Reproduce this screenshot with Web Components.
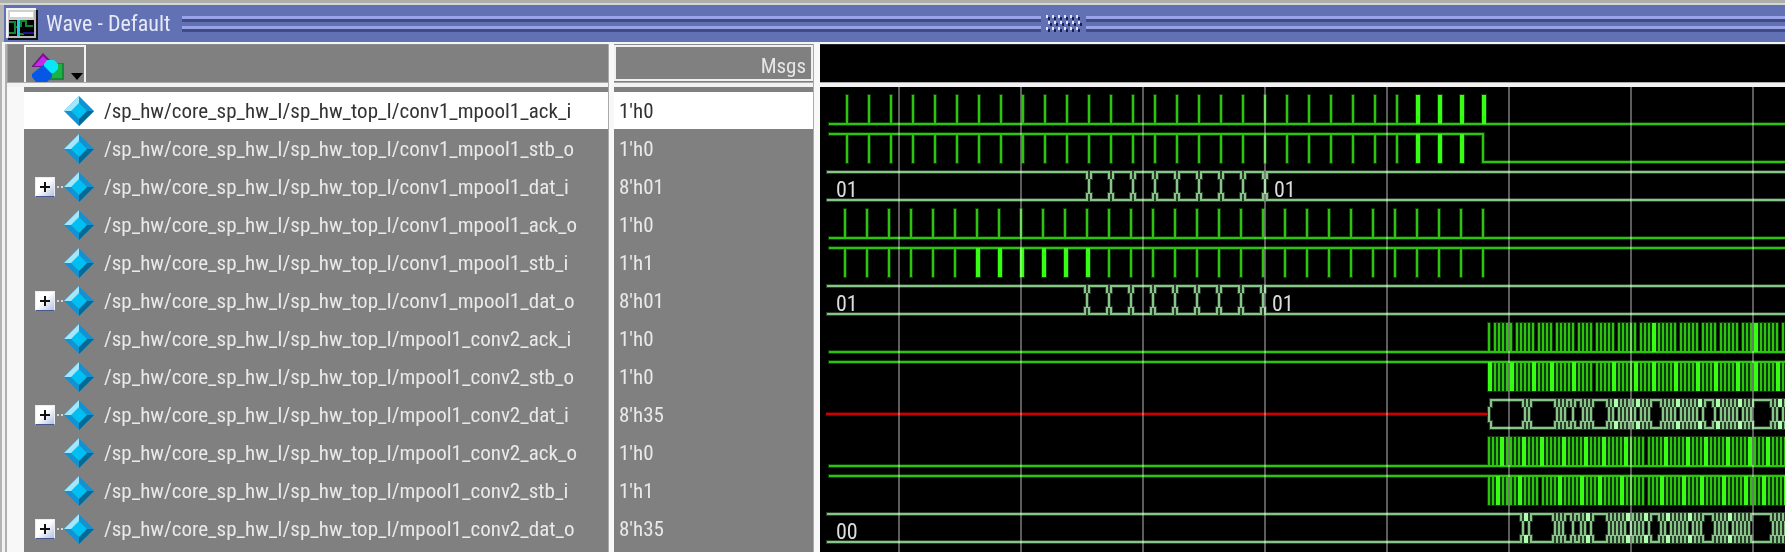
<!DOCTYPE html>
<html lang="en">
<head>
<meta charset="utf-8">
<title>Wave - Default</title>
<style>
html, body { margin: 0; height: 100%; background: #fff; }
body { font: 21px/38px "Roboto Condensed", "Liberation Sans Narrow", Roboto, "Liberation Sans", sans-serif; overflow: hidden; }
wave-window { height: 100%; }
</style>
</head>
<body>
<wave-window></wave-window>
<script>
const PREFIX = '/sp_hw/core_sp_hw_I/sp_hw_top_I/';

// Clock pulses repeat every 22px, bursts are placed on a 2px time grid.
const PITCH = 22, BURST = 668, UNIT = 2;
const pulses = (first, count, wide = [], lead = 0) =>
  Array.from({ length: count }, (_, k) => wide.includes(k) ? { x: first + k * PITCH - lead, w: 4 } : { x: first + k * PITCH, w: 2 });
const steps = (first, count) => Array.from({ length: count }, (_, k) => first + k * PITCH);
// A burst ticks every second unit; a break delays the next tick by one unit.
const burst = (breaks, wide) => {
  const out = [];
  for (let u = 0; u < 152;) {
    out.push({ x: BURST + u * UNIT, w: wide.includes(u) ? 4 : 2 });
    u += breaks.includes(u) ? 3 : 2;
  }
  return out;
};
const units = list => list.map(u => BURST + u * UNIT);

const A = [0, 11, 22, 31, 42, 51, 62, 73, 82, 93, 104, 113, 124, 133, 144];
const B = [6, 17, 26, 37, 48, 57, 68, 77, 88, 99, 108, 119, 130, 139, 150];
const C = [4, 15, 24, 35, 46, 55, 66, 77, 86, 97, 106, 117, 128, 137, 148];

const SIGNALS = [
  { name: 'conv1_mpool1_ack_i', value: "1'h0", selected: true, level: 0, ticks: pulses(26, 30, [26, 27, 28, 29], 2) },
  { name: 'conv1_mpool1_stb_o', value: "1'h0", level: 1, ticks: pulses(26, 29, [26, 27, 28], 2), fall: 662 },
  { name: 'conv1_mpool1_dat_i', value: "8'h01", bus: steps(268, 9), labels: [[16, '01'], [454, '01']] },
  { name: 'conv1_mpool1_ack_o', value: "1'h0", level: 0, ticks: pulses(24, 30) },
  { name: 'conv1_mpool1_stb_i', value: "1'h1", level: 1, ticks: pulses(24, 30, [6, 7, 8, 9, 10, 11]) },
  { name: 'conv1_mpool1_dat_o', value: "8'h01", bus: steps(266, 9), labels: [[16, '01'], [452, '01']] },
  { name: 'mpool1_conv2_ack_i', value: "1'h0", level: 0, ticks: burst(A, [82, 133]) },
  { name: 'mpool1_conv2_stb_o', value: "1'h0", level: 1, ticks: burst(A, A.filter(u => u !== 51)) },
  { name: 'mpool1_conv2_dat_i', value: "8'h35", unknown: BURST, bus: units([0, 18, 20, 34, 36, 38, 42, 47, 49, 51, 60, 62, 65, 67, 69, 71, 73, 76, 78, 80, 87, 89, 91, 93, 96, 98, 100, 102, 104, 107, 113, 116, 118, 120, 122, 124, 127, 129, 131, 142, 144, 147, 149]) },
  { name: 'mpool1_conv2_ack_o', value: "1'h0", level: 0, ticks: burst(B, B.filter(u => u !== 77)) },
  { name: 'mpool1_conv2_stb_i', value: "1'h1", level: 1, ticks: burst(C, C.filter(u => u !== 24 && u !== 77)) },
  { name: 'mpool1_conv2_dat_o', value: "8'h35", bus: units([17, 20, 33, 35, 37, 42, 46, 48, 51, 60, 62, 64, 66, 68, 71, 73, 75, 77, 80, 86, 88, 91, 93, 95, 97, 99, 102, 104, 106, 113, 115, 117, 119, 122, 124, 126, 128, 130, 142, 144, 146, 148]), labels: [[16, '00']] },
];

const shadow = (host, html) => {
  const t = document.createElement('template');
  t.innerHTML = html;
  host.attachShadow({ mode: 'open' }).append(t.content.cloneNode(true));
  return host.shadowRoot;
};

class WaveTitle extends HTMLElement {
  connectedCallback() {
    shadow(this, `<style>
      :host { display: flex; align-items: center; height: 37px; margin-left: 4px; background: #6270b4; color: #e6e9f6; }
      h1 { margin: 0 12px 0 8px; font-size: 22px; font-weight: 400; line-height: 30px; white-space: nowrap; }
      svg { flex: none; display: block; }
      .icon { margin-left: 2px; }
      .rail { flex: 699 1 0; height: 16px; background: linear-gradient(#98a3ea 0 3px, #424c80 3px 6px, #6270b4 6px 10px, #98a3ea 10px 13px, #424c80 13px 16px); }
      .rail.first { flex-grow: 859; }
      .grip { margin: 0 4px; }
    </style>
    <svg class="icon" width="32" height="32" viewBox="0 0 32 32" aria-hidden="true">
      <path fill="#111" d="M2 2h30v30H2z"/><path fill="#f4f4f4" d="M0 0h30v30H0z"/><path fill="#b8b8b8" d="M2 2h28v28H2z"/>
      <path fill="#d0d0d0" d="M2 2h26v26H2z"/><path fill="#fff" d="M4 4h23v5H4z"/><path fill="#000" d="M3 12h25v16H3z"/>
      <path fill="none" stroke="#108838" stroke-width="2" d="M3 14h6v5h4m2 0v-6h5v5h7M3 25h6v-5m4 6h5"/>
      <path fill="#24129a" d="M17 24h11v2H17z"/><path fill="#25c5e4" d="M11 12h3v16h-3z"/>
    </svg>
    <h1><slot></slot></h1>
    <span class="rail first"></span>
    <svg class="grip" width="37" height="18" aria-hidden="true"><defs><pattern id="dot" width="6" height="6" patternUnits="userSpaceOnUse">
      <path fill="#dfe4ff" d="M1 0h2v3H1z"/><path fill="#1b2142" d="M3 2h2v3H3z"/></pattern></defs>
      <path fill="url(#dot)" d="M0 0h36v6H0zM0 12h36v6H0z"/><g transform="translate(2 6)"><path fill="url(#dot)" d="M0 0h35v6H0z"/></g></svg>
    <span class="rail"></span>`);
  }
}

class ShapeMenu extends HTMLElement {
  connectedCallback() {
    shadow(this, `<style>
      :host { display: block; }
      button { display: block; height: 37px; width: 62px; padding: 0; border: 2px solid #f2f2f2; border-bottom: 0; background: #808080; }
      svg { display: block; }
    </style>
    <button aria-label="Signal shapes"><svg width="58" height="35" viewBox="0 0 58 35">
      <path fill="#138a38" d="M24 16h14v17H20z"/><path fill="#1cb244" d="M25 17h11v14H22z"/>
      <path fill="#7a118f" d="M6 19 17 6l9 9-4 5H6z"/><path fill="#c42be6" d="M9 18 17 9l5 5-5 5H8z"/>
      <path fill="#08e6fa" d="M21 13h7l4 4v5l-4 4h-6l-4-4v-5z"/>
      <path fill="#0657e6" d="m17 18 9 9v3l-5 5H10l-4-5v-3z"/>
      <path fill="#000" d="M45 26h12l-6 7z"/>
    </svg></button>`);
  }
}

class SignalName extends HTMLElement {
  connectedCallback() {
    const open = this.hasAttribute('bus');
    shadow(this, `<style>
      :host { display: grid; grid-template-columns: 20px 9px 30px 1fr; align-items: center; height: 38px; padding-left: 11px; box-sizing: border-box;
        color: #e9e9e9; white-space: nowrap; overflow: hidden; }
      :host([selected]) { background: #fff; color: #333; height: 37px; margin-bottom: 1px; }
      button { width: 20px; height: 20px; padding: 0; border: 1px solid #eceef6; border-bottom-color: #44588c; background: linear-gradient(135deg, #fff 45%, #b4c0e2); }
      svg { display: block; }
      i { height: 2px; background: repeating-linear-gradient(90deg, #808080 0 2px, #d4d4d4 2px 4px); }
      .gem { grid-column: 3; }
      .text { grid-column: 4; padding-left: 10px; }
    </style>
    ${open ? `<button aria-label="Expand"><svg width="18" height="18"><path stroke="#111" stroke-width="2" d="M4 9h10M9 4v10"/></svg></button><i></i>` : ''}
    <svg class="gem" width="30" height="30" viewBox="0 0 30 30" aria-hidden="true">
      <path fill="#1591cf" d="M15 0 30 15 15 30 0 15z"/><path fill="#a4e6fa" d="M15 0v8L8 15H0z"/>
      <path fill="#046994" d="M15 30v-8l7-7h8z"/><path fill="#00c0f3" d="m15 7 8 8-8 8-8-8z"/>
    </svg><span class="text"><slot></slot></span>`);
  }
}

class SignalValue extends HTMLElement {
  connectedCallback() {
    shadow(this, `<style>
      :host { display: block; height: 38px; padding-left: 5px; box-sizing: border-box; color: #e9e9e9; white-space: nowrap; }
      :host([selected]) { background: #fff; color: #333; height: 37px; margin-bottom: 1px; }
    </style><slot></slot>`);
  }
}

class WaveTrace extends HTMLElement {
  set signal(s) {
    const hi = 4, lo = 32;
    const R = (x, y, w, h) => ({ x, y, w, h });
    const items = [];
    let color = '#2cc40f', bright = '#37ff13';
    if (s.bus) {
      color = '#88c588'; bright = '#aeffae';
      let from = s.unknown || 7;
      const marks = new Set();
      for (const x of s.bus) {
        if (x !== s.unknown) {
          if (x - 1 > from) for (const y of [hi, lo]) items.push(R(from, y - 1, x - 1 - from, 2));
          marks.add(x - 2);
        }
        items.push(R(x, 11, 2, 15));
        marks.add(x + 2);
        from = x + 2;
      }
      for (const y of [hi, lo]) items.push(R(from, y - 1, 4000, 2));
      // Edges of neighbouring values that touch are drawn as one wide bright edge.
      for (const x of marks) {
        if (marks.has(x - 2)) continue;
        const w = marks.has(x + 2) ? 4 : 2;
        items.push(R(x, 3, w, 8), R(x, 25, w, 8));
      }
    } else {
      const y = s.level ? hi : lo;
      items.push(R(9, y - 1, s.fall ? s.fall - 7 : 4000, 2));
      if (s.fall) items.push(R(s.fall, 3, 2, 30), R(s.fall, lo - 1, 4000, 2));
      for (const t of s.ticks) items.push(R(t.x, s.level ? hi : 3, t.w, 29));
    }
    const draw = (r, g, c) => `<rect x="${r.x - g}" y="${r.y - g}" width="${r.w + 2 * g}" height="${r.h + 2 * g}" fill="${c}"/>`;
    shadow(this, `<style>
      :host { display: block; height: 38px; }
      svg { display: block; width: 100%; height: 38px; }
      text { font-size: 22px; fill: #dcdcdc; }
    </style><svg aria-hidden="true">
      <g opacity=".3">${items.map(r => draw(r, 1, color)).join('')}</g>
      ${s.unknown ? `<rect x="6" y="16" width="${s.unknown - 4}" height="4" fill="#500000"/><rect x="6" y="17" width="${s.unknown - 4}" height="2" fill="#cc0000"/>` : ''}
      ${items.map(r => draw(r, 0, r.w === 4 ? bright : color)).join('')}
      ${(s.labels || []).map(([x, t]) => `<text x="${x}" y="29">${t}</text>`).join('')}
    </svg>`);
  }
}

class WaveWindow extends HTMLElement {
  connectedCallback() {
    const attr = s => (s.selected ? ' selected' : '') + (s.bus ? ' bus' : '');
    const root = shadow(this, `<style>
      :host { display: flex; flex-direction: column; overflow: hidden; padding-top: 5px; box-sizing: border-box;
        background: linear-gradient(#adb0aa 0 3px, #d4d6d6 3px 5px, #b4b4b4 5px); }
      wave-title { flex: none; }
      main { flex: 1; display: grid; grid-template-columns: 602px 200px 1fr; column-gap: 5px; min-height: 0; overflow: hidden;
        margin-left: 2px; padding-left: 5px; border-top: 2px solid #f4f4f4;
        background: linear-gradient(90deg, #f2f2f2 0 3px, #b0b0b0 3px 5px, #f8f8f8 5px); }
      section { min-width: 0; }
      header { height: 39px; box-sizing: border-box; border-top: 1px solid #8c8c8c; border-bottom: 1px solid #aaa; background: #808080; }
      .body { border-top: 4px solid #f2f2f2; }
      .list { padding-top: 5px; background: #808080; min-height: 100vh; }
      .names header { padding-left: 16px; border-left: 1px solid #999; }
      .names .list { margin-left: 17px; }
      .names, .values { border-right: 1px solid #aaa; }
      .values header div { height: 36px; box-sizing: border-box; border: 2px solid #f0f0f0; color: #e6e6e6; text-align: right; padding-right: 5px; line-height: 38px; }
      .waves { margin-left: 1px; }
      .waves header { background: #000; border-top-color: #222; }
      .waves .list { background: #000; position: relative; }
      .grid { position: absolute; inset: 0; mix-blend-mode: screen; pointer-events: none;
        background: repeating-linear-gradient(90deg, #5c5c5c 0 2px, transparent 2px 122px) 78px 0; }
    </style>
    <wave-title>Wave - Default</wave-title>
    <main>
      <section class="names"><header><shape-menu></shape-menu></header><div class="body"><div class="list">
        ${SIGNALS.map(s => `<signal-name${attr(s)}>${PREFIX}${s.name}</signal-name>`).join('')}</div></div></section>
      <section class="values"><header><div>Msgs</div></header><div class="body"><div class="list">
        ${SIGNALS.map(s => `<signal-value${attr(s)}>${s.value}</signal-value>`).join('')}</div></div></section>
      <section class="waves"><header></header><div class="body"><div class="list">
        ${SIGNALS.map(() => '<wave-trace></wave-trace>').join('')}<div class="grid"></div></div></div></section>
    </main>`);
    root.querySelectorAll('wave-trace').forEach((t, i) => { t.signal = SIGNALS[i]; });
  }
}

customElements.define('wave-title', WaveTitle);
customElements.define('shape-menu', ShapeMenu);
customElements.define('signal-name', SignalName);
customElements.define('signal-value', SignalValue);
customElements.define('wave-trace', WaveTrace);
customElements.define('wave-window', WaveWindow);
</script>
</body>
</html>
